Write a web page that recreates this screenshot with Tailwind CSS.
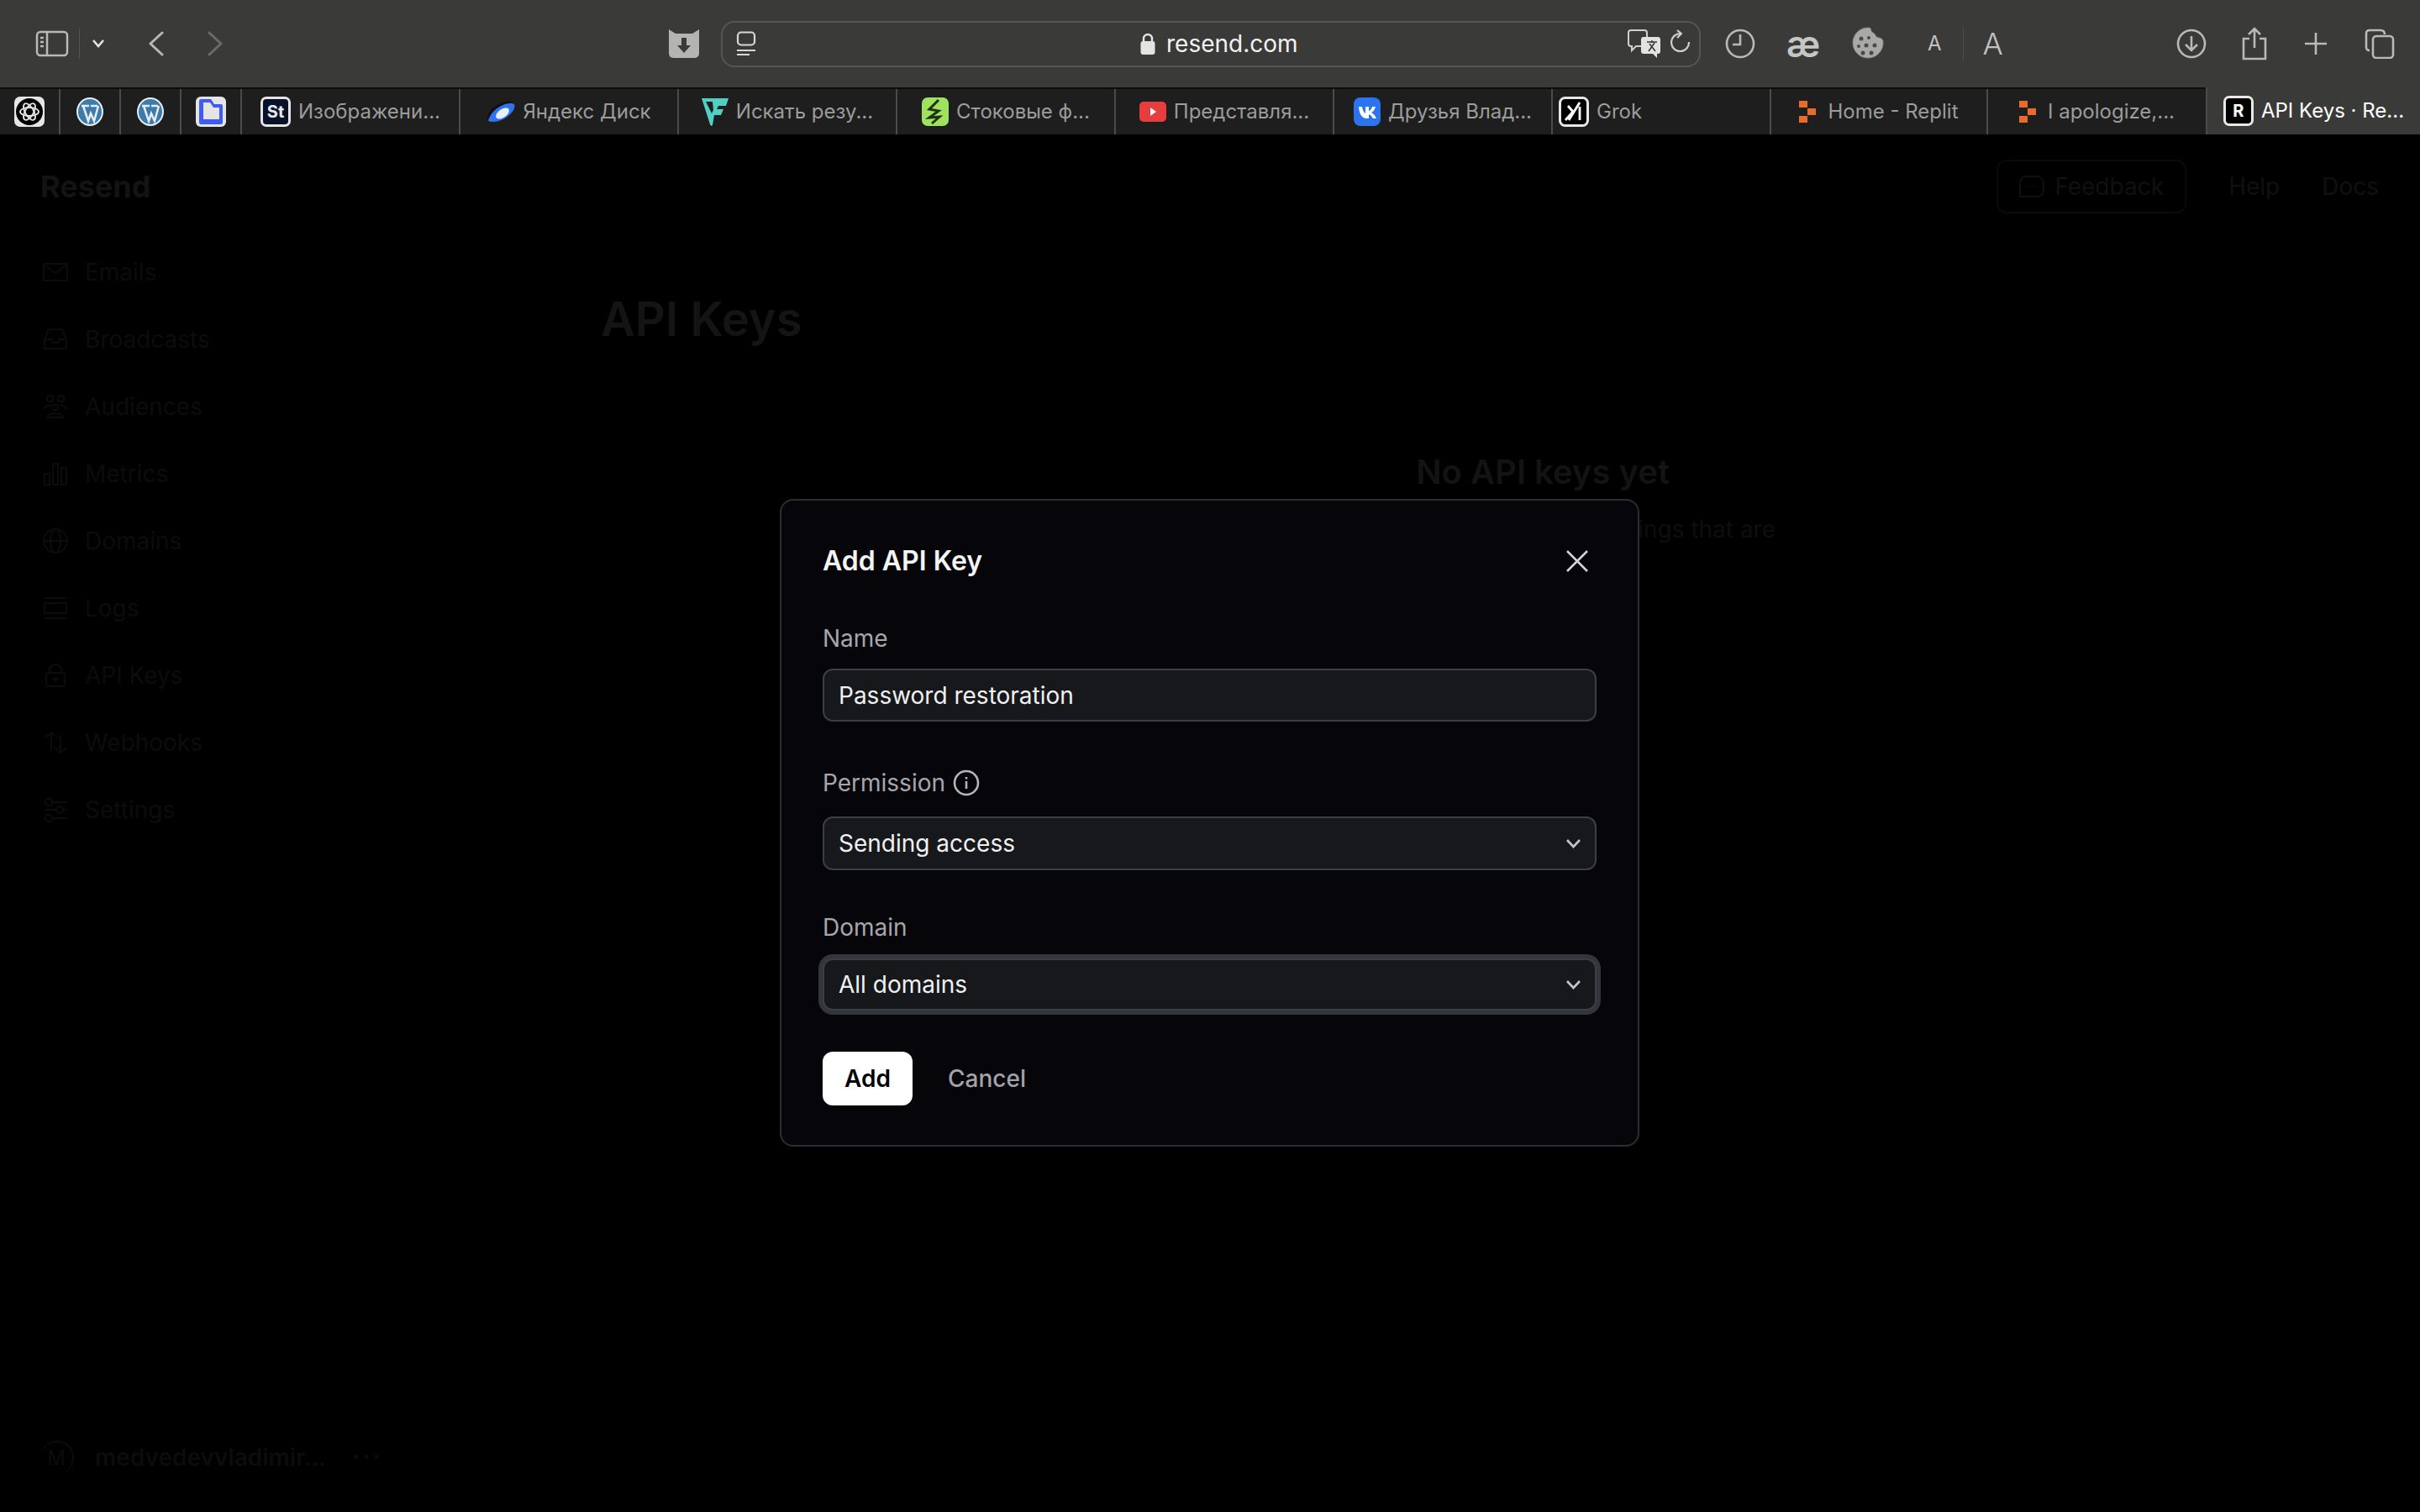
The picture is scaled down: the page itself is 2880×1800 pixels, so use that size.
<!DOCTYPE html>
<html lang="en">
<head>
  <meta charset="UTF-8" />
  <title>API Keys · Resend</title>
  <script src="https://cdn.jsdelivr.net/npm/@tailwindcss/browser@4"></script>
</head>
<body class="relative w-[2880px] h-[1800px] overflow-hidden bg-black font-['Inter',sans-serif]">

  <!-- Safari toolbar -->
  <header class="h-[104px] bg-[#3a3a39] flex items-center text-[#b9b9b8]">
    <svg class="ml-[42px] w-[40px] h-[32px]" viewBox="0 0 40 32" fill="none" stroke="currentColor" stroke-width="2.5"><rect x="2" y="2" width="36" height="28" rx="4"/><path d="M14 2v28M6 9h4M6 14h4M6 19h4"/></svg>
    <div class="ml-[12px] w-px h-[36px] bg-[#555554]"></div>
    <svg class="ml-[15px] w-[14px] h-[10px]" viewBox="0 0 14 10" fill="none" stroke="#e6e6e6" stroke-width="2.5"><path d="M1 1l6 7 6-7"/></svg>
    <svg class="ml-[52px] w-[20px] h-[30px]" viewBox="0 0 20 30" fill="none" stroke="currentColor" stroke-width="3" stroke-linecap="round" stroke-linejoin="round"><path d="M17 2L3 15l14 13"/></svg>
    <svg class="ml-[50px] w-[20px] h-[30px]" viewBox="0 0 20 30" fill="none" stroke="#6a6a69" stroke-width="3" stroke-linecap="round" stroke-linejoin="round"><path d="M3 2l14 13L3 28"/></svg>
    <svg class="ml-[530px] w-[36px] h-[36px]" viewBox="0 0 36 36"><path d="M0 1l8 5h20l8-5v28q0 6-6 6H6q-6 0-6-6z" fill="#b4b4b3"/><path d="M15 11h6v9h5l-8 9-8-9h5z" fill="#3a3a39"/></svg>

    <div class="ml-[26px] w-[1166px] h-[55px] rounded-[16px] border-2 border-[#565655] flex items-center relative">
      <svg class="ml-[16px] w-[24px] h-[30px]" viewBox="0 0 24 30" fill="none" stroke="#d8d8d8" stroke-width="2.2"><rect x="2" y="1.5" width="20" height="15" rx="4"/><path d="M1 23h22M1 28h15"/></svg>
      <div class="absolute left-[497px] flex items-center gap-[13px]">
        <svg class="w-[18px] h-[26px]" viewBox="0 0 18 26"><path d="M4 11V7a5 5 0 0 1 10 0v4" fill="none" stroke="#e4e4e4" stroke-width="2.4"/><rect x="0.5" y="10" width="17" height="16" rx="3" fill="#e4e4e4"/></svg>
        <span class="text-[28px] leading-[36px] text-[#f2f2f2]">resend.com</span>
      </div>
      <svg class="ml-auto w-[40px] h-[36px]" viewBox="0 0 40 36"><path d="M4 2h16q3 0 3 3v13q0 3-3 3H10l-5 5v-5H4q-3 0-3-3V5q0-3 3-3z" fill="none" stroke="#cfcfcf" stroke-width="2"/><path d="M19 10h17q3 0 3 3v14q0 3-3 3h-1v5l-5-5H19q-3 0-3-3V13q0-3 3-3z" fill="#e2e2e2"/><path d="M23 16h12M29 14v3M25 27l7-10M33 27l-7-9" stroke="#3a3a39" stroke-width="1.6" fill="none"/></svg>
      <svg class="ml-[11px] mr-[10px] w-[24px] h-[34px]" viewBox="0 0 24 34" fill="none" stroke="#cfcfcf" stroke-width="2.2"><path d="M12 5a10.500 10.500 0 1 0 10 10"/><path d="M8 1l5 4-5 5" stroke-linejoin="round"/></svg>
    </div>

    <svg class="ml-[29px] w-[36px] h-[36px]" viewBox="0 0 36 36" fill="none" stroke="currentColor" stroke-width="2.6"><circle cx="18" cy="18" r="16"/><path d="M18 7v12H9"/></svg>
    <span class="ml-[35px] w-[44px] text-center text-[44px] leading-[44px] font-semibold text-[#c6c6c5]">æ</span>
    <svg class="ml-[36px] w-[38px] h-[40px]" viewBox="0 0 38 40"><path d="M20 1c4 0 1 4 5 6s2 5 7 6 5 3 5 7a18 18 0 1 1-17-19z" fill="#a9a9a8" stroke="#8a8a89"/><g fill="#4a4a49"><circle cx="11" cy="14" r="2.500"/><circle cx="20" cy="13" r="2"/><circle cx="8" cy="23" r="2"/><circle cx="17" cy="22" r="2.500"/><circle cx="27" cy="22" r="2.500"/><circle cx="13" cy="31" r="2.500"/><circle cx="23" cy="31" r="2.500"/></g></svg>
    <span class="ml-[52px] text-[24px] text-[#c2c2c1]">A</span>
    <div class="ml-[25px] w-px h-[40px] bg-[#4d4d4c]"></div>
    <span class="ml-[23px] text-[36px] font-light text-[#c2c2c1]">A</span>
    <svg class="ml-[206px] w-[36px] h-[36px]" viewBox="0 0 36 36" fill="none" stroke="currentColor" stroke-width="2.6"><circle cx="18" cy="18" r="16"/><path d="M18 9v17M11 19l7 7 7-7"/></svg>
    <svg class="ml-[41px] w-[32px] h-[40px]" viewBox="0 0 32 40" fill="none" stroke="currentColor" stroke-width="2.6"><path d="M10 14H3v24h26V14h-7M16 25V2M9 9l7-7 7 7"/></svg>
    <svg class="ml-[43px] w-[28px] h-[28px]" viewBox="0 0 28 28" fill="none" stroke="currentColor" stroke-width="2.6"><path d="M14 1v26M1 14h26"/></svg>
    <svg class="ml-[44px] w-[36px] h-[36px]" viewBox="0 0 36 36" fill="none" stroke="currentColor" stroke-width="2.6"><path d="M6 26q-4 0-4-4V6q0-4 4-4h13q5 0 5 5"/><rect x="10" y="9" width="24" height="26" rx="4"/></svg>
  </header>

  <!-- Tab strip -->
  <nav class="h-[56px] flex text-[24px] text-[#9c9c9b] border-t-2 border-[#0c0c0c] bg-[#1e1e1e]">
    <div class="w-[72px] flex items-center justify-center border-r-2 border-[#4b4b4a]">
      <svg class="w-[36px] h-[36px]" viewBox="0 0 36 36"><rect width="36" height="36" rx="7" fill="#e6e6e6"/><circle cx="18" cy="18" r="16" fill="#000"/><g fill="none" stroke="#e6e6e6" stroke-width="1.800"><ellipse cx="18" cy="18" rx="11" ry="5"/><ellipse cx="18" cy="18" rx="11" ry="5" transform="rotate(60 18 18)"/><ellipse cx="18" cy="18" rx="11" ry="5" transform="rotate(120 18 18)"/></g></svg>
    </div>
    <div class="w-[72px] flex items-center justify-center border-r-2 border-[#4b4b4a]">
      <svg class="w-[32px] h-[34px]" viewBox="0 0 32 34"><ellipse cx="16" cy="17" rx="16" ry="17" fill="#e6eef4"/><ellipse cx="16" cy="17" rx="14" ry="15" fill="#3d7bab"/><path d="M6 10h9M17 10h8M8 10l6 18 3-9 4 9 5-18" fill="none" stroke="#e6eef4" stroke-width="2.500"/></svg>
    </div>
    <div class="w-[72px] flex items-center justify-center border-r-2 border-[#4b4b4a]">
      <svg class="w-[32px] h-[34px]" viewBox="0 0 32 34"><ellipse cx="16" cy="17" rx="16" ry="17" fill="#e6eef4"/><ellipse cx="16" cy="17" rx="14" ry="15" fill="#3d7bab"/><path d="M6 10h9M17 10h8M8 10l6 18 3-9 4 9 5-18" fill="none" stroke="#e6eef4" stroke-width="2.500"/></svg>
    </div>
    <div class="w-[72px] flex items-center justify-center border-r-2 border-[#4b4b4a]">
      <svg class="w-[36px] h-[36px]" viewBox="0 0 36 36"><rect width="36" height="36" rx="6" fill="#e4e4e6"/><path d="M6 3h12l4 6h8q2 0 2 2v20q0 2-2 2H6q-2 0-2-2V5q0-2 2-2z" fill="#3f5cf0"/><path d="M9 7h8l4 6h7v14H9z" fill="#e4e4e6"/></svg>
    </div>
    <div class="w-[260px] flex items-center justify-center gap-[9px] border-r-2 border-[#4b4b4a]">
      <span class="w-[36px] h-[36px] rounded-[7px] border-[3px] border-[#e4e4e4] bg-[#07122a] text-[#e8e8e8] text-[20px] leading-[30px] font-bold text-center">St</span>
      <span>Изображени...</span>
    </div>
    <div class="w-[260px] flex items-center justify-center gap-[9px] border-r-2 border-[#4b4b4a]">
      <svg class="w-[34px] h-[26px]" viewBox="0 0 34 26"><path d="M0 22Q3 8 18 2q8-3 15 0Q22 2 14 9 6 17 0 22z" fill="#111"/><path d="M2 24Q6 10 22 4q8-2 11 0 2 6-6 13-9 8-19 8-4 0-6-1z" fill="#2f73ee"/><ellipse cx="19" cy="15" rx="9" ry="5" transform="rotate(-35 19 15)" fill="#e8f0ff"/></svg>
      <span>Яндекс Диск</span>
    </div>
    <div class="w-[260px] flex items-center justify-center gap-[9px] border-r-2 border-[#4b4b4a]">
      <svg class="w-[32px] h-[34px]" viewBox="0 0 32 34"><path d="M0 1h32l-3 9H20l-2 4h8l-3 7h-8l-2 12q-2 2-3-1z" fill="#4fd0c2"/><path d="M5 5h8l1 10-2 4z" fill="#1e1e1e"/></svg>
      <span>Искать резу...</span>
    </div>
    <div class="w-[260px] flex items-center justify-center gap-[9px] border-r-2 border-[#4b4b4a]">
      <svg class="w-[32px] h-[34px]" viewBox="0 0 32 34"><rect width="32" height="34" rx="7" fill="#9fe25f"/><path d="M20 3L9 14l11 2-11 8 12-1-9 8" fill="none" stroke="#1d3312" stroke-width="3"/></svg>
      <span>Стоковые ф...</span>
    </div>
    <div class="w-[260px] flex items-center justify-center gap-[9px] border-r-2 border-[#4b4b4a]">
      <svg class="w-[32px] h-[24px]" viewBox="0 0 32 24"><rect width="32" height="24" rx="5" fill="#e83d3f"/><path d="M13 7l7 5-7 5z" fill="#fff"/></svg>
      <span>Представля...</span>
    </div>
    <div class="w-[260px] flex items-center justify-center gap-[9px] border-r-2 border-[#4b4b4a]">
      <svg class="w-[32px] h-[34px]" viewBox="0 0 32 34"><rect width="32" height="34" rx="8" fill="#2c73f0"/><path d="M6 11h4q1 6 4 8v-8h4v5q3-1 4-5h4q-1 5-5 7 4 2 6 7h-4q-2-4-5-5v5h-2Q7 25 6 11z" fill="#fff"/></svg>
      <span>Друзья Влад...</span>
    </div>
    <div class="w-[260px] flex items-center gap-[9px] pl-[7px] border-r-2 border-[#4b4b4a]">
      <svg class="w-[36px] h-[36px]" viewBox="0 0 36 36"><rect x="1.500" y="1.500" width="33" height="33" rx="6" fill="#000" stroke="#e6e6e6" stroke-width="3"/><path d="M8 28l9-10-6-7M25 7L12 28M25 12v16" fill="none" stroke="#fff" stroke-width="2.800"/></svg>
      <span>Grok</span>
    </div>
    <div class="w-[258px] flex items-center justify-center gap-[14px] border-r-2 border-[#4b4b4a]">
      <svg class="w-[20px] h-[26px]" viewBox="0 0 20 26" fill="#e96b2a"><rect width="10" height="8"/><rect x="10" y="9" width="10" height="8"/><rect y="18" width="10" height="8"/></svg>
      <span>Home - Replit</span>
    </div>
    <div class="w-[259px] flex items-center justify-center gap-[14px]">
      <svg class="w-[20px] h-[26px]" viewBox="0 0 20 26" fill="#e96b2a"><rect width="10" height="8"/><rect x="10" y="9" width="10" height="8"/><rect y="18" width="10" height="8"/></svg>
      <span>I apologize,...</span>
    </div>
    <div class="flex-1 -mt-[2px] flex items-center justify-center gap-[9px] bg-[#3a3a39] border-l-2 border-[#4b4b4a] text-white">
      <span class="w-[36px] h-[36px] rounded-[7px] border-[3px] border-[#e8e8e8] bg-black text-white text-[20px] leading-[30px] font-bold text-center">R</span>
      <span>API Keys · Re...</span>
    </div>
  </nav>

  <!-- Dimmed page behind the dialog -->
  <div class="flex h-[1640px]">
    <aside class="w-[715px] h-full flex flex-col pl-[48px] text-[#0c0c0c] text-[28px]">
      <div class="h-[124px] flex items-center text-[36px] font-bold text-[#131313]">Resend</div>
      <ul class="flex flex-col">
        <li class="h-[80px] flex items-center gap-[20px]"><svg class="ml-[3px] w-[30px] h-[26px]" viewBox="0 0 30 26" fill="none" stroke="currentColor" stroke-width="2"><rect x="1" y="3" width="28" height="20"/><path d="M1 4l14 10L29 4"/></svg>Emails</li>
        <li class="h-[80px] flex items-center gap-[20px]"><svg class="ml-[3px] w-[30px] h-[26px]" viewBox="0 0 30 26" fill="none" stroke="currentColor" stroke-width="2"><path d="M7 1h16l5 12v11H2V13zM2 13h8l2 4h6l2-4h8"/></svg>Broadcasts</li>
        <li class="h-[80px] flex items-center gap-[20px]"><svg class="ml-[3px] w-[30px] h-[30px]" viewBox="0 0 30 30" fill="none" stroke="currentColor" stroke-width="2"><rect x="5" y="2" width="7" height="7" rx="2"/><rect x="18" y="2" width="7" height="7" rx="2"/><rect x="12" y="13" width="6" height="6" rx="2"/><path d="M1 18q3-5 9-4M29 18q-3-5-9-4M6 28q0-5 9-5t9 5z"/></svg>Audiences</li>
        <li class="h-[80px] flex items-center gap-[20px]"><svg class="ml-[3px] w-[30px] h-[30px]" viewBox="0 0 30 30" fill="none" stroke="currentColor" stroke-width="2"><rect x="2" y="15" width="6" height="13"/><rect x="12" y="3" width="6" height="25"/><rect x="22" y="8" width="6" height="20"/></svg>Metrics</li>
        <li class="h-[80px] flex items-center gap-[20px]"><svg class="ml-[3px] w-[30px] h-[30px]" viewBox="0 0 30 30" fill="none" stroke="currentColor" stroke-width="2"><circle cx="15" cy="15" r="14"/><ellipse cx="15" cy="15" rx="6" ry="14"/><path d="M1 15h28"/></svg>Domains</li>
        <li class="h-[80px] flex items-center gap-[20px]"><svg class="ml-[3px] w-[30px] h-[28px]" viewBox="0 0 30 28" fill="none" stroke="currentColor" stroke-width="2"><path d="M2 2h26M2 26h26"/><rect x="2" y="8" width="26" height="12" rx="1"/></svg>Logs</li>
        <li class="h-[80px] flex items-center gap-[20px]"><svg class="ml-[3px] w-[30px] h-[30px]" viewBox="0 0 30 30" fill="none" stroke="currentColor" stroke-width="2"><rect x="4" y="12" width="22" height="16" rx="3"/><path d="M8 12V9a7 7 0 0 1 14 0v3"/><path d="M13 19h4l-2 3z" fill="currentColor"/></svg>API Keys</li>
        <li class="h-[80px] flex items-center gap-[20px]"><svg class="ml-[3px] w-[30px] h-[30px]" viewBox="0 0 30 30" fill="none" stroke="currentColor" stroke-width="2"><path d="M10 24V3M3 9l7-6 7 6M21 6v21M14 21l7 6 7-6"/></svg>Webhooks</li>
        <li class="h-[80px] flex items-center gap-[20px]"><svg class="ml-[3px] w-[30px] h-[30px]" viewBox="0 0 30 30" fill="none" stroke="currentColor" stroke-width="2"><path d="M12 6h17M2 15h14M24 15h5M12 25h17"/><circle cx="7" cy="6" r="4"/><circle cx="20" cy="15" r="4"/><circle cx="7" cy="25" r="4"/></svg>Settings</li>
      </ul>
      <div class="mt-auto mb-[44px] flex items-center">
        <span class="w-[40px] h-[40px] rounded-full border-r-2 border-t-2 border-[#0c0c0c] flex items-center justify-center text-[24px]">M</span>
        <span class="ml-[25px] font-semibold">medvedevvladimir...</span>
        <span class="ml-[31px] text-[16px] tracking-[3px] -mt-[4px]">•••</span>
      </div>
    </aside>

    <main class="flex-1 flex flex-col">
      <div class="h-[124px] pr-[49px] flex items-center justify-end text-[28px] text-[#101010]">
        <div class="h-[64px] w-[226px] rounded-[12px] border-2 border-[#0a0a0a] flex items-center justify-center gap-[12px]">
          <svg class="w-[30px] h-[26px]" viewBox="0 0 30 26" fill="none" stroke="currentColor" stroke-width="2"><path d="M9 1h12a8 8 0 0 1 8 8v8a8 8 0 0 1-8 8H1V9a8 8 0 0 1 8-8zM10 13h1M15 13h1M20 13h1"/></svg>
          Feedback
        </div>
        <span class="ml-[50px]">Help</span>
        <span class="ml-[50px]">Docs</span>
      </div>
      <h1 class="mt-[64px] h-[64px] text-[56px] leading-[64px] font-semibold text-[#141414]">API Keys</h1>
      <div class="mt-[122px] pr-[767px] flex flex-col items-end">
        <p class="mr-[126px] text-[40px] leading-[56px] font-semibold text-[#131313]">No API keys yet</p>
        <p class="mt-[20px] text-[28px] leading-[40px] text-[#0e0e0e]">Create a key to send from the things that are</p>
      </div>
    </main>
  </div>

  <!-- Add API Key dialog -->
  <div class="absolute left-[928px] top-[594px] w-[1023px] h-[771px] px-[49px] pt-[50px] rounded-[16px] border-2 border-[#2b2d32] bg-[#06060a]">
    <div class="h-[44px] flex items-center justify-between">
      <h2 class="text-[32px] leading-[44px] font-semibold text-[#f5f5f6]">Add API Key</h2>
      <svg class="mr-[10px] w-[26px] h-[26px]" viewBox="0 0 26 26" fill="none" stroke="#d4d4d8" stroke-width="2.500"><path d="M1 1l24 24M25 1L1 25"/></svg>
    </div>
    <label class="mt-[50px] block h-[40px] text-[28px] leading-[40px] text-[#a6a6ac]">Name</label>
    <input class="mt-[16px] block w-full h-[63px] px-[17px] rounded-[12px] border-2 border-[#3c3e45] bg-[#17181c] text-[28px] text-[#f0f0f2]" value="Password restoration" />
    <label class="mt-[53px] h-[40px] flex items-center gap-[9px] text-[28px] leading-[40px] text-[#a6a6ac]">
      Permission
      <svg class="w-[32px] h-[32px]" viewBox="0 0 32 32" fill="none" stroke="#b4b4b9" stroke-width="2.600"><circle cx="16" cy="16" r="14"/><path d="M16 14v9M16 9v2.500"/></svg>
    </label>
    <button class="mt-[20px] w-full h-[64px] px-[17px] rounded-[12px] border-2 border-[#3c3e45] bg-[#17181c] flex items-center justify-between text-[28px] text-[#f0f0f2]">
      Sending access
      <svg class="w-[17px] h-[11px]" viewBox="0 0 17 11" fill="none" stroke="#c4c4c8" stroke-width="2.600"><path d="M1 1l7.500 8L16 1"/></svg>
    </button>
    <label class="mt-[48px] block h-[40px] text-[28px] leading-[40px] text-[#a6a6ac]">Domain</label>
    <button class="mt-[17px] w-full h-[62px] px-[17px] rounded-[12px] border-2 border-[#3c3e45] ring-[5px] ring-[#33353b] bg-[#17181c] flex items-center justify-between text-[28px] text-[#f0f0f2]">
      All domains
      <svg class="w-[17px] h-[11px]" viewBox="0 0 17 11" fill="none" stroke="#c4c4c8" stroke-width="2.600"><path d="M1 1l7.500 8L16 1"/></svg>
    </button>
    <div class="mt-[49px] flex items-center gap-[42px]">
      <button class="w-[107px] h-[64px] rounded-[12px] bg-white text-[28px] font-semibold text-black">Add</button>
      <button class="text-[28px] font-medium text-[#a2a2a9]">Cancel</button>
    </div>
  </div>

</body>
</html>
